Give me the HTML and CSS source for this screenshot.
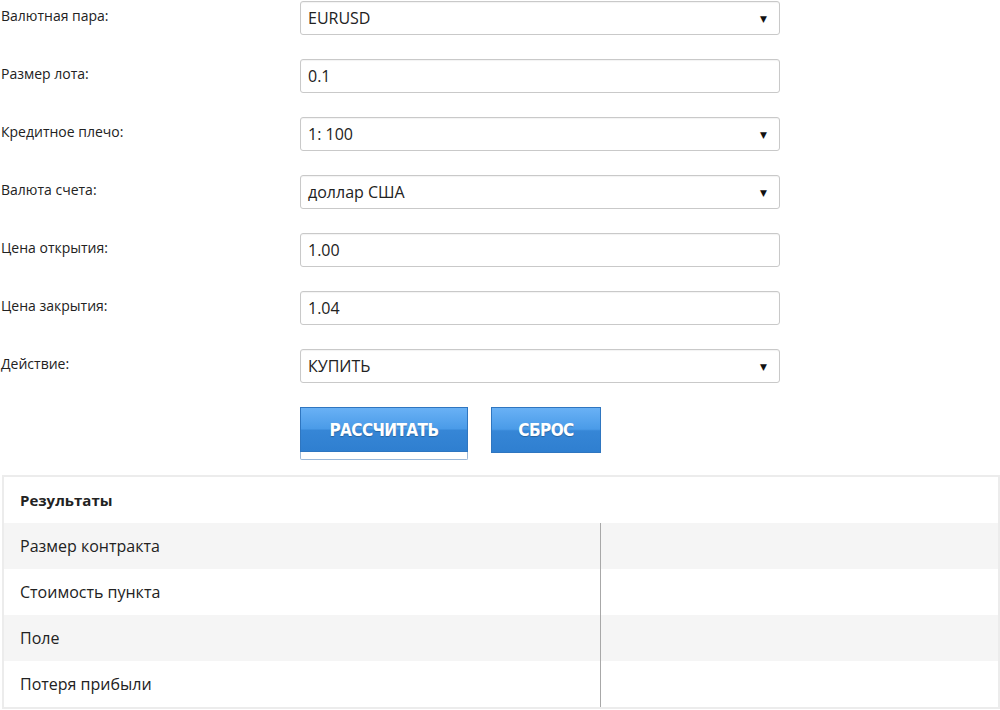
FILE: index.html
```html
<!DOCTYPE html>
<html lang="ru">
<head>
<meta charset="utf-8">
<link rel="stylesheet" href="styles.css">
</head>
<body>
<div class="page">
  <form class="calc">
    <div class="row">
      <label class="lbl">Валютная пара:</label>
      <div class="field select"><span>EURUSD</span><i class="arrow">▼</i></div>
    </div>
    <div class="row">
      <label class="lbl">Размер лота:</label>
      <div class="field"><span>0.1</span></div>
    </div>
    <div class="row">
      <label class="lbl">Кредитное плечо:</label>
      <div class="field select"><span>1: 100</span><i class="arrow">▼</i></div>
    </div>
    <div class="row">
      <label class="lbl">Валюта счета:</label>
      <div class="field select"><span>доллар США</span><i class="arrow">▼</i></div>
    </div>
    <div class="row">
      <label class="lbl">Цена открытия:</label>
      <div class="field"><span>1.00</span></div>
    </div>
    <div class="row">
      <label class="lbl">Цена закрытия:</label>
      <div class="field"><span>1.04</span></div>
    </div>
    <div class="row">
      <label class="lbl">Действие:</label>
      <div class="field select"><span>КУПИТЬ</span><i class="arrow">▼</i></div>
    </div>
    <div class="buttons">
      <div class="btn-wrap"><button type="button" class="btn btn-calc">РАССЧИТАТЬ</button></div>
      <button type="button" class="btn btn-reset">СБРОС</button>
    </div>
  </form>
  <table class="results">
    <tr class="head"><th colspan="2">Результаты</th></tr>
    <tr class="alt"><td class="name">Размер контракта</td><td class="val"></td></tr>
    <tr><td class="name">Стоимость пункта</td><td class="val"></td></tr>
    <tr class="alt"><td class="name">Поле</td><td class="val"></td></tr>
    <tr><td class="name">Потеря прибыли</td><td class="val"></td></tr>
  </table>
</div>
</body>
</html>
```
FILE: styles.css
```css
html, body {
  margin: 0;
  padding: 0;
  background: #fff;
}
body {
  font-family: "Open Sans", "Noto Sans", "DejaVu Sans", sans-serif;
  color: #222;
}
.page {
  padding: 1px 0 0 2px;
  width: 998px;
}
.calc {
  margin: 0;
}
.row {
  display: grid;
  grid-template-columns: 298px 480px;
  height: 58px;
}
.lbl {
  font-size: 14px;
  line-height: 16px;
  padding-top: 7px;
  margin-left: -1px;
  color: #222;
}
.field {
  box-sizing: border-box;
  height: 34px;
  border: 1px solid #c9c9c9;
  border-radius: 3px;
  display: flex;
  align-items: center;
  padding: 0 12px 0 7px;
  font-size: 16px;
  color: #222;
  box-shadow: inset 0 1px 1px rgba(0,0,0,0.05);
}
.field span {
  flex: 1;
}
.arrow {
  font-style: normal;
  font-size: 9px;
  color: #111;
}
.buttons {
  display: flex;
  gap: 23px;
  padding-left: 298px;
  margin-top: 0;
  height: 68px;
}
.btn-wrap {
  box-sizing: border-box;
  width: 168px;
  height: 53px;
  border: 1px solid #9bb8d8;
  border-top: none;
  border-radius: 0 0 2px 2px;
}
.btn {
  box-sizing: border-box;
  border: 1px solid #2f76c0;
  background: linear-gradient(to bottom, #69b1f5 0%, #4a9be8 48%, #3686d6 52%, #2f7fd0 100%);
  color: #fff;
  font-family: "Liberation Sans Narrow", "DejaVu Sans Condensed", "Liberation Sans", sans-serif;
  font-stretch: condensed;
  font-weight: 600;
  font-size: 17px;
  letter-spacing: -0.6px;
  text-shadow: 0 1px 1px rgba(0,0,0,0.25);
  padding: 0;
  cursor: pointer;
  margin: 0;
}
.btn-calc {
  width: 168px;
  height: 45px;
  margin-left: -1px;
  display: block;
}
.btn-reset {
  width: 110px;
  height: 46px;
}
.results {
  border-collapse: collapse;
  width: 998px;
  border: 2px solid #ececec;
  font-size: 16px;
  color: #222;
}
.results th {
  text-align: left;
  font-weight: bold;
  font-size: 15px;
  height: 46px;
  padding: 0 0 0 16px;
}
.results td {
  height: 46px;
  padding: 0 0 0 16px;
}
.results tr.alt td {
  background: #f5f5f5;
}
.results td.name {
  width: 580px;
  border-right: 1px solid #a8a8a8;
}
```
